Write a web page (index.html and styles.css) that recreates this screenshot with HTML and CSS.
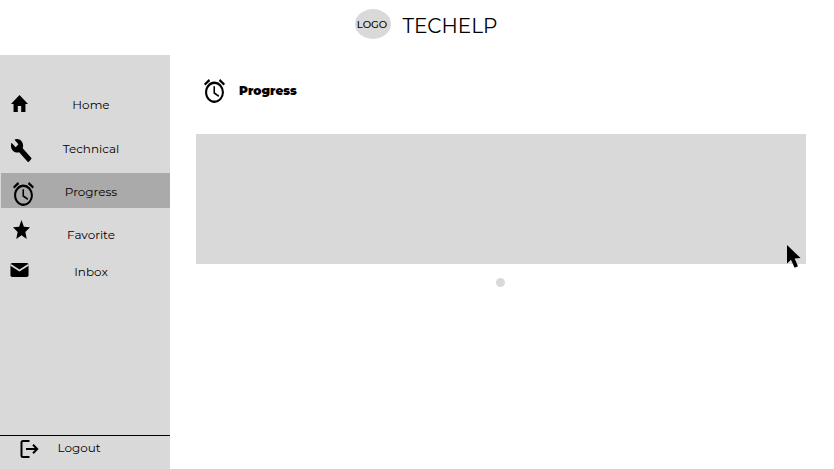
FILE: index.html
```html
<!DOCTYPE html>
<html lang="en">
<head>
<meta charset="utf-8">
<title>TECHELP</title>
<link rel="stylesheet" href="styles.css">
</head>
<body>
<svg class="defs" width="0" height="0">
  <symbol id="alarm" viewBox="2 1.8 20 20.2" preserveAspectRatio="none">
    <path d="M22 5.72l-4.6-3.86-1.29 1.53 4.6 3.86L22 5.72zM7.88 3.39L6.6 1.86 2 5.71l1.29 1.53 4.59-3.85zM12.5 8H11v6l4.75 2.85.75-1.23-4-2.37V8zM12 4c-4.97 0-9 4.03-9 9s4.02 9 9 9a9 9 0 0 0 0-18zm0 16c-3.87 0-7-3.13-7-7s3.13-7 7-7 7 3.13 7 7-3.13 7-7 7z"/>
  </symbol>
</svg>
<header class="topbar">
  <div class="logo"><span>LOGO</span></div>
  <h1 class="brand">TECHELP</h1>
</header>
<div class="body">
  <aside class="sidebar">
    <nav class="menu">
      <a class="item home">
        <svg class="icon" viewBox="2 3 20 17" preserveAspectRatio="none"><path d="M10 20v-6h4v6h5v-8h3L12 3 2 12h3v8z"/></svg>
        <span class="label">Home</span>
      </a>
      <a class="item technical">
        <svg class="icon" viewBox="1 1.1 22.6 21.9" preserveAspectRatio="none"><path d="M22.7 19l-9.1-9.1c.9-2.3.4-5-1.5-6.9-2-2-5-2.4-7.4-1.3L9 6 6 9 1.6 4.7C.4 7.1.9 10.1 2.9 12.1c1.9 1.9 4.6 2.4 6.9 1.5l9.1 9.1c.4.4 1 .4 1.4 0l2.3-2.3c.5-.4.5-1.1.1-1.4z"/></svg>
        <span class="label">Technical</span>
      </a>
      <a class="item progress">
        <svg class="icon"><use href="#alarm"/></svg>
        <span class="label">Progress</span>
      </a>
      <a class="item favorite">
        <svg class="icon" viewBox="2 2 20 19" preserveAspectRatio="none"><path d="M12 17.27L18.18 21l-1.64-7.03L22 9.24l-7.19-.61L12 2 9.19 8.63 2 9.24l5.46 4.73L5.82 21z"/></svg>
        <span class="label">Favorite</span>
      </a>
      <a class="item inbox">
        <svg class="icon" viewBox="1.500 4 21 16" preserveAspectRatio="none"><rect x="2" y="4" width="20" height="16" rx="2"/><path class="flap" d="M2 6l10 6.600L22 6"/></svg>
        <span class="label">Inbox</span>
      </a>
    </nav>
    <a class="item logout">
      <svg class="icon" viewBox="-0.500 0 19 18"><path d="M9 1H2.500Q1 1 1 2.500v13Q1 17 2.500 17H9M5.500 9H17M12.500 4.800L16.700 9l-4.200 4.200"/></svg>
      <span class="label">Logout</span>
    </a>
  </aside>
  <main class="content">
    <div class="heading">
      <svg class="icon"><use href="#alarm"/></svg>
      <h2>Progress</h2>
    </div>
    <section class="panel">
      <svg class="cursor" viewBox="0 0 14 23"><path d="M0 0v18.500l4-3.800L7.600 22.800l3.400-1.600L7.600 13.500l6-.4z"/></svg>
    </section>
    <div class="dot"></div>
  </main>
</div>
</body>
</html>
```
FILE: styles.css
```css
* { box-sizing: border-box; }
body {
  margin: 0;
  height: 469px;
  overflow: hidden;
  background: #fff;
  color: #000;
  font-family: Montserrat, Inter, sans-serif;
  font-size: 12px;
  line-height: 16px;
}
.defs { position: absolute; }
h1, h2 { margin: 0; }
.topbar {
  display: flex;
  height: 55px;
  padding: 9px 0 0 355px;
}
.logo {
  display: flex;
  align-items: center;
  justify-content: center;
  width: 36px;
  height: 30px;
  border-radius: 50%;
  background: #d9d9d9;
  font-size: 10px;
  font-weight: 500;
}
.logo span { margin: 1px 0 0 -2px; }
.brand {
  margin: 5px 0 0 11.500px;
  font-size: 20px;
  font-weight: 400;
  line-height: 24px;
}
.body { display: flex; height: 414px; }
.sidebar {
  display: flex;
  flex-direction: column;
  width: 170px;
  background: #d9d9d9;
}
.menu { flex: 1; padding-top: 32px; }
.item { display: flex; align-items: flex-start; }
.item .icon { flex: none; }
.label {
  flex: none;
  width: 80px;
  margin-left: auto;
  margin-right: 39px;
  text-align: center;
}
.home { height: 43px; padding-top: 10px; }
.home .icon { width: 17px; height: 17px; margin: -2px 0 0 11px; }
.technical { height: 43px; padding-top: 11px; }
.technical .icon { width: 21px; height: 23px; margin: -2px 0 0 11px; }
.progress { height: 35px; margin-left: 1px; padding-top: 11px; background: #aaa; }
.progress .icon { width: 21px; height: 24px; margin: -2px 0 0 12px; }
.favorite { height: 45px; padding-top: 19px; }
.favorite .icon { width: 17px; height: 19px; margin: -7px 0 0 13px; }
.inbox { height: 30px; padding-top: 11px; }
.inbox .icon { width: 19px; height: 14px; margin: -1px 0 0 10px; }
.flap { fill: none; stroke: #d9d9d9; stroke-width: 1.800; }
.logout { height: 34px; padding-top: 4px; border-top: 1px solid #000; }
.logout .icon { width: 19px; height: 18px; margin-left: 20px; fill: none; stroke: #000; stroke-width: 2; }
.logout .label { margin-right: 51px; }
.content { flex: 1; padding: 24px 28px 0 26px; }
.heading { display: flex; height: 55px; padding-left: 8px; }
.heading .icon { width: 21px; height: 24px; }
.heading h2 {
  margin: 4px 0 0 14px;
  font-size: 12px;
  font-weight: 900;
  line-height: 16px;
}
.panel { position: relative; height: 130px; background: #d9d9d9; }
.cursor { position: absolute; right: 5px; top: 111px; width: 14px; height: 23px; }
.dot {
  width: 9px;
  height: 9px;
  margin: 14px 0 0 300px;
  border-radius: 50%;
  background: #d9d9d9;
}
```
